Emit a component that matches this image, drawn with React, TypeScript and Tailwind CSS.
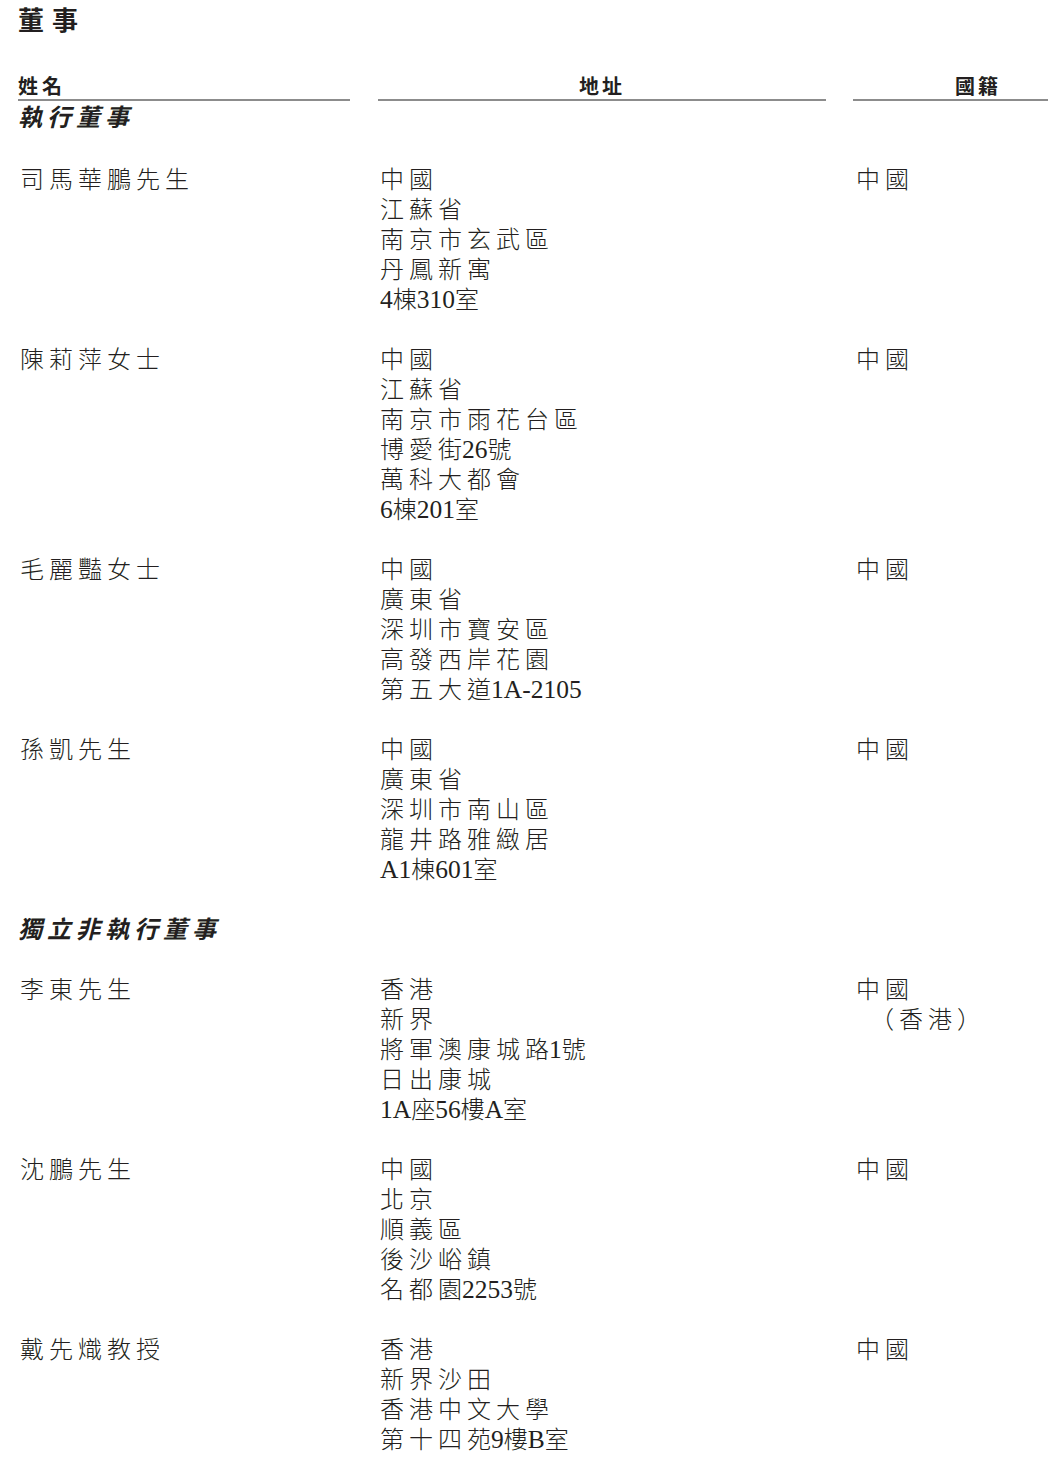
import React from "react";

const isCJK = (c: string) => /[\u3000-\u9fff\uff00-\uffef]/.test(c);

function T({ s }: { s: string }) {
  const chars = Array.from(s);
  return (
    <>
      {chars.map((c, i) => {
        const next = chars[i + 1];
        const cjk = isCJK(c);
        const spaced = cjk && next !== undefined && isCJK(next);
        const cls = spaced
          ? "tracking-[5px]"
          : cjk
          ? "tracking-normal"
          : "tracking-normal text-[25.5px]";
        return (
          <span key={i} className={cls}>
            {c}
          </span>
        );
      })}
    </>
  );
}

type Row = { name: string; addr: string[]; nat: string[] };

const exec: Row[] = [
  { name: "司馬華鵬先生", addr: ["中國", "江蘇省", "南京市玄武區", "丹鳳新寓", "4棟310室"], nat: ["中國"] },
  { name: "陳莉萍女士", addr: ["中國", "江蘇省", "南京市雨花台區", "博愛街26號", "萬科大都會", "6棟201室"], nat: ["中國"] },
  { name: "毛麗豔女士", addr: ["中國", "廣東省", "深圳市寶安區", "高發西岸花園", "第五大道1A-2105"], nat: ["中國"] },
  { name: "孫凱先生", addr: ["中國", "廣東省", "深圳市南山區", "龍井路雅緻居", "A1棟601室"], nat: ["中國"] },
];

const indep: Row[] = [
  { name: "李東先生", addr: ["香港", "新界", "將軍澳康城路1號", "日出康城", "1A座56樓A室"], nat: ["中國", "（香港）"] },
  { name: "沈鵬先生", addr: ["中國", "北京", "順義區", "後沙峪鎮", "名都園2253號"], nat: ["中國"] },
  { name: "戴先熾教授", addr: ["香港", "新界沙田", "香港中文大學", "第十四苑9樓B室"], nat: ["中國"] },
];

function DirRow({ r }: { r: Row }) {
  return (
    <div className="flex mb-[30px]">
      <div className="w-[332px] shrink-0 pl-[2px]">
        <div><T s={r.name} /></div>
      </div>
      <div className="w-[448px] ml-[28px] shrink-0 pl-[2px]">
        {r.addr.map((a, i) => (
          <div key={i}><T s={a} /></div>
        ))}
      </div>
      <div className="w-[250px] ml-[27px] shrink-0 pl-[3px]">
        {r.nat.map((a, i) => (
          <div key={i} className={i > 0 ? "pl-[14px]" : ""}><T s={a} /></div>
        ))}
      </div>
    </div>
  );
}

export default function App() {
  return (
    <div
      className="w-[1048px] h-[1472px] overflow-hidden bg-white text-[#231f20] pl-[18px]"
      style={{ fontFamily: '"Liberation Serif", "Noto Sans CJK TC", serif' }}
    >
      <div className="w-[1100px]">
        <div className="pt-[7px] text-[26px] leading-[30px] font-bold tracking-[8px]">董事</div>
        <div className="flex mt-[38px] text-[20px] leading-[24px] font-bold">
          <div className="w-[332px] shrink-0 border-b-2 border-[#8c8c8c] tracking-[4px]">姓名</div>
          <div className="w-[448px] ml-[28px] shrink-0 border-b-2 border-[#8c8c8c] text-center tracking-[3px]">地址</div>
          <div className="w-[250px] ml-[27px] shrink-0 border-b-2 border-[#8c8c8c] text-center tracking-[3px]">國籍</div>
        </div>
        <div className="text-[24px] leading-[30px] font-light">
          <div className="mt-[2px] mb-[32px] font-bold italic tracking-[5px]">執行董事</div>
          {exec.map((r, i) => (
            <DirRow key={i} r={r} />
          ))}
          <div className="mb-[30px] font-bold italic tracking-[5px]">獨立非執行董事</div>
          {indep.map((r, i) => (
            <DirRow key={i} r={r} />
          ))}
        </div>
      </div>
    </div>
  );
}
